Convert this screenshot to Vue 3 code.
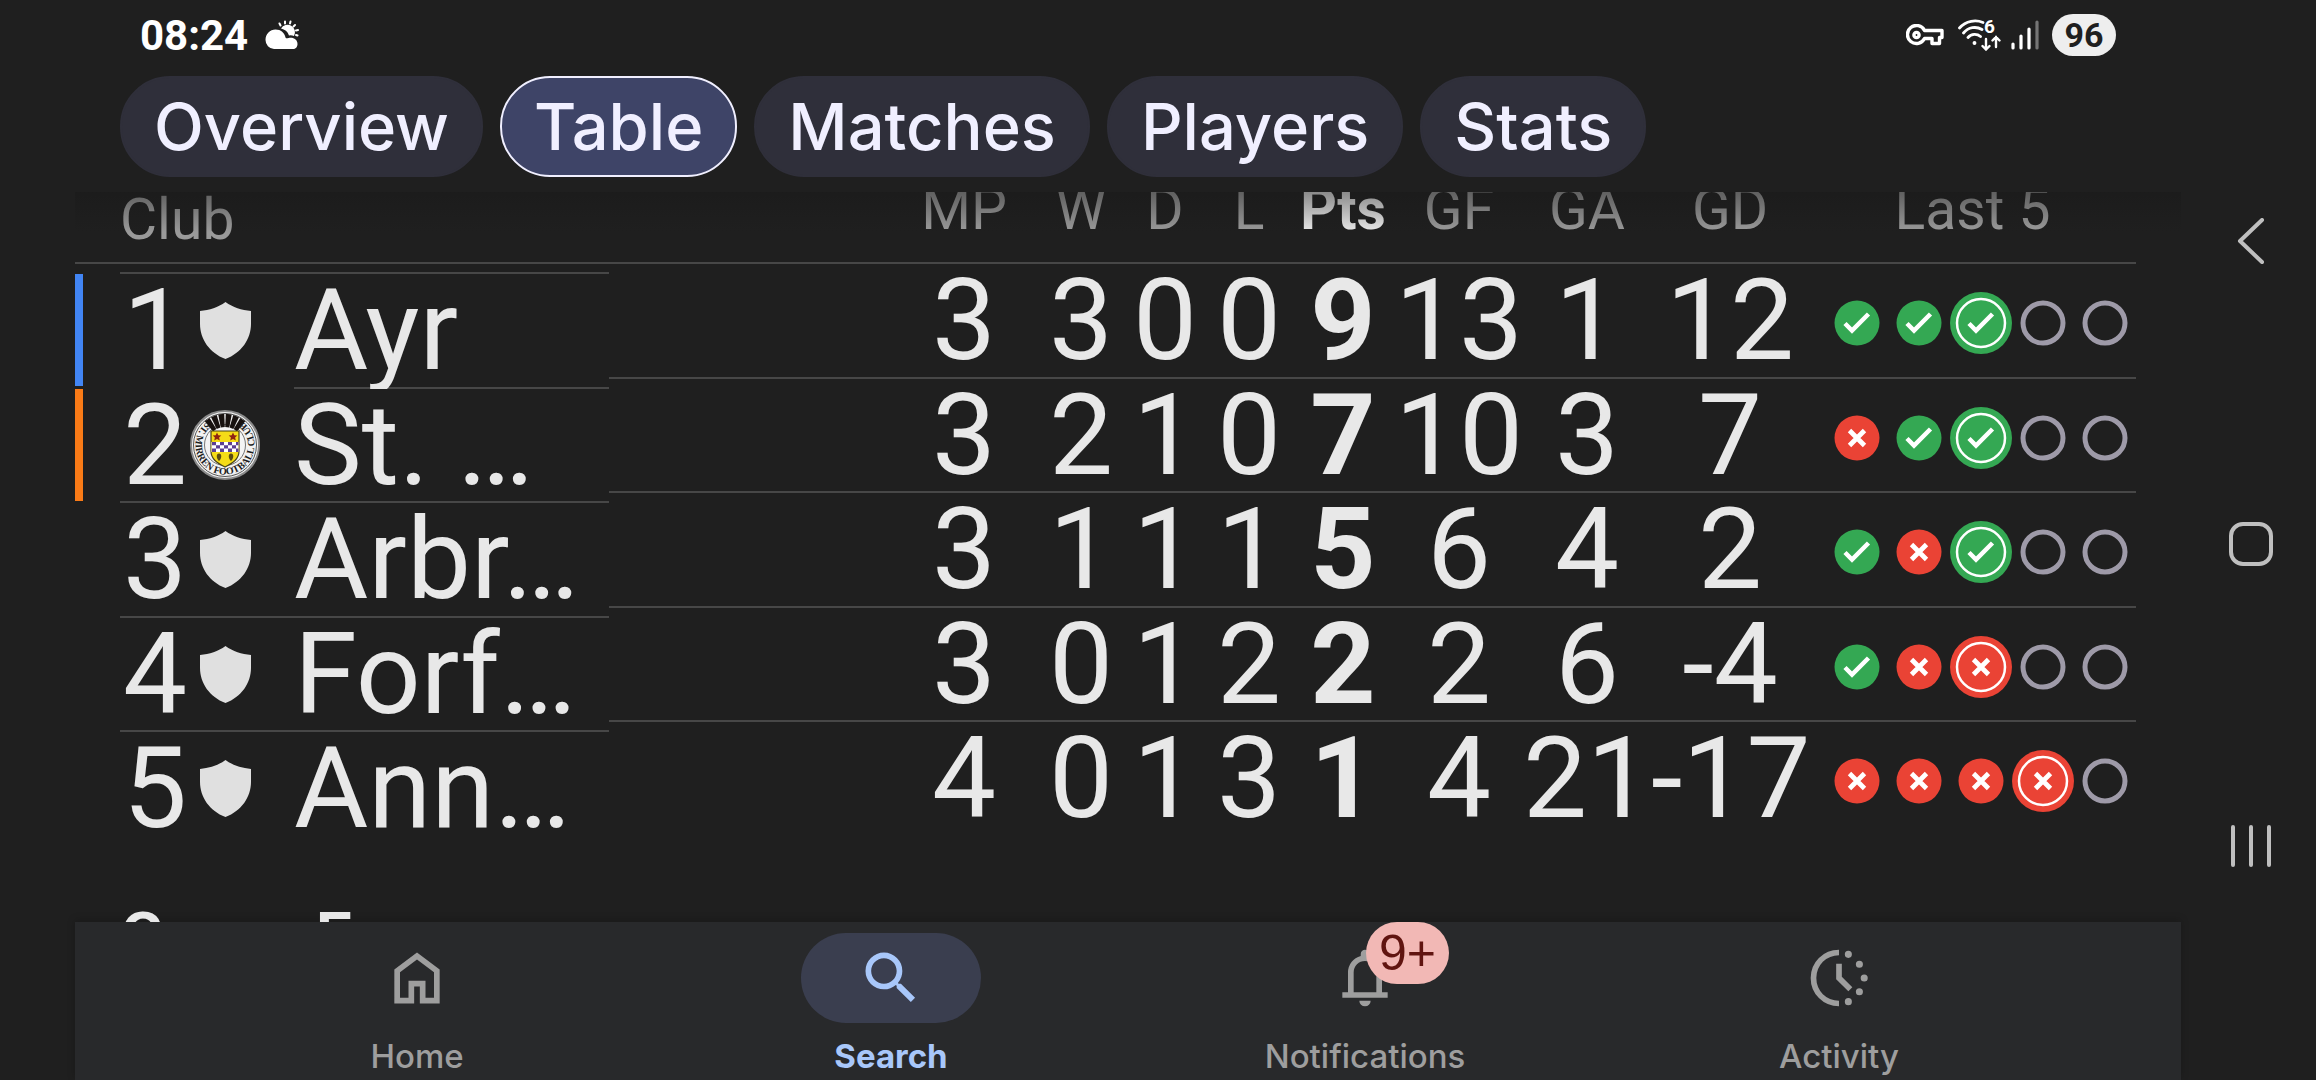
<template>
  <div class="screen">
    <div class="app">
      <header class="status-bar">
        <span class="time">08:24</span>
        <svg class="weather" viewBox="0 0 34 30" aria-hidden="true">
          <g stroke="#fff" stroke-width="2" stroke-linecap="round">
            <path d="M14.5 3.5l1 2M20 1.500v2M25.500 1.500l-.5 2M30 5l-1.500 1.500M33 10l-2 .5M32.500 15.500l-1.500-.5" />
          </g>
          <path d="M16 8.500a7.500 7.500 0 1 1 13 7.500 9 9 0 0 0-5-.6 11 11 0 0 0-8-6.900z" fill="#fff" />
          <path d="M9 29a9 9 0 0 1-8.500-9C.5 14 5 9.500 10.500 9.500c5.500 0 9 3.500 10 8 .5 1 1.500 1 3 .5 5-1 9 1.500 9 6 0 3-2 5-4.500 5z" fill="#fff" />
        </svg>
        <span class="grow"></span>
        <svg class="key" viewBox="0 0 38 22" aria-hidden="true" fill="none" stroke="#fff" stroke-width="3.400">
          <path d="M18.500 6.500H36v7h-2.500v6H26v-5h-7.500A9 9 0 1 1 18.500 6.500z" stroke-linejoin="round" />
          <circle cx="10.500" cy="11" r="2.600" />
        </svg>
        <svg class="wifi" viewBox="0 0 44 32" aria-hidden="true" fill="none" stroke="#fff" stroke-width="2.800" stroke-linecap="round">
          <path d="M1.500 9C8 1.500 18 .5 25 3.500M5.500 14C10.500 8 18 7 24 10.500M10 18.500c3.500-4 9-4 12.500-1" />
          <circle cx="16.500" cy="24" r="1.200" fill="#fff" stroke-width="1.500" />
          <path d="M28 20v10M24.500 27l3.500 3.500 3.500-3.500M38 28V18M34.500 21.500L38 18l3.500 3.500" stroke-width="2.400" />
          <text x="26" y="14" class="wifi-gen">6</text>
        </svg>
        <svg class="signal" viewBox="0 0 28 30" aria-hidden="true" stroke="#fff" stroke-width="3.200" stroke-linecap="round">
          <path d="M2 24v4M10 16v12M18 9v19" />
          <path d="M26 2v26" stroke="#757575" />
        </svg>
        <span class="battery">96</span>
      </header>

      <nav class="tabs" aria-label="Sections">
        <button
          v-for="tab in tabs"
          :key="tab"
          type="button"
          :class="['chip', { active: tab === activeTab }]"
          @click="activeTab = tab"
        >
          {{ tab }}
        </button>
      </nav>

      <main class="content">
        <div class="standings">
          <table class="clubs">
            <colgroup>
              <col class="col-marker" />
              <col class="col-rank" />
              <col class="col-crest" />
              <col />
            </colgroup>
            <thead>
              <tr>
                <th></th>
                <th colspan="3">Club</th>
              </tr>
            </thead>
            <tbody>
              <tr v-for="(team, index) in teams" :key="team.name">
                <td class="marker">
                  <span v-if="team.zone" :class="['zone', team.zone]"></span>
                </td>
                <td :class="['rank', { open: index === 1 }]">{{ index + 1 }}</td>
                <td :class="['crest', { open: index === 1 }]">
                  <svg v-if="team.crest" class="crest-badge" viewBox="0 0 70 70" aria-hidden="true">
                    <defs>
                      <path id="crest-ring" d="M15.500 13A29.500 29.500 0 1 0 54.500 13" />
                    </defs>
                    <circle cx="35" cy="35" r="34" fill="#f2f2f2" stroke="#8a8a8a" stroke-width="2" />
                    <circle cx="35" cy="35" r="31.500" fill="none" stroke="#555" stroke-width="1" />
                    <circle cx="35" cy="35" r="20.500" fill="#f4f4f4" stroke="#777" stroke-width="1" />
                    <path
                      v-for="angle in [-35, -21, -7, 7, 21, 35]"
                      :key="angle"
                      d="M33 17L32 4h6l-1 13z"
                      :transform="`rotate(${angle} 35 35)`"
                      fill="#17110f"
                    />
                    <text class="crest-text">
                      <textPath href="#crest-ring" startOffset="50%" text-anchor="middle">ST. MIRREN FOOTBALL CLUB</textPath>
                    </text>
                    <path d="M21 21h28v20c0 8-6 12-14 16-8-4-14-8-14-16z" fill="#f5dc17" stroke="#4a4416" stroke-width="1.200" />
                    <path d="M21.500 32h27v10h-27z" fill="#fff" />
                    <path d="M22 32h4v3.300h-4zM30 32h4v3.300h-4zM38 32h4v3.300h-4zM26 35.300h4v3.300h-4zM34 35.300h4v3.300h-4zM42 35.300h4v3.300h-4zM22 38.600h4V42h-4zM30 38.600h4V42h-4zM38 38.600h4V42h-4zM46 32h2.500v3.300H46zM46 38.600h2.500V42H46z" fill="#5b3f94" />
                    <path d="M27 22.500l1.300 2.800 3 .3-2.200 2 .7 3-2.800-1.500-2.800 1.500.7-3-2.200-2 3-.3zM43 22.500l1.300 2.800 3 .3-2.200 2 .7 3-2.800-1.500-2.800 1.500.7-3-2.200-2 3-.3z" fill="#8f2412" />
                    <path d="M29 43.500c3 0 3 5 0 7.500-3-2.500-3-7.500 0-7.500zM41 43.500c3 0 3 5 0 7.500-3-2.500-3-7.500 0-7.500z" fill="#5a4a12" />
                  </svg>
                  <svg v-else class="crest-shield" viewBox="0 0 51 57" aria-hidden="true">
                    <path d="M25.500 0C18 5.500 9.500 8 0 9v13c0 15 9.500 29 25.500 35C41.500 51 51 37 51 22V9C41.500 8 33 5.500 25.500 0z" fill="#e0e0e0" />
                  </svg>
                </td>
                <td class="name"><span>{{ team.name }}</span></td>
              </tr>
            </tbody>
          </table>

          <table class="stats">
            <colgroup>
              <col />
              <col v-for="col in columns" :key="col.label" :class="`col-${col.size}`" />
            </colgroup>
            <thead>
              <tr>
                <th></th>
                <th v-for="col in columns" :key="col.label" :class="{ strong: col.label === 'Pts' }">
                  {{ col.label }}
                </th>
              </tr>
            </thead>
            <tbody>
              <tr v-for="team in teams" :key="team.name">
                <td></td>
                <td v-for="(value, i) in team.stats" :key="i" :class="{ strong: i === 4 }">{{ value }}</td>
                <td>
                  <div class="form">
                    <svg
                      v-for="(result, i) in team.form"
                      :key="i"
                      class="result"
                      viewBox="0 0 62 62"
                      role="img"
                      :aria-label="labels[result]"
                    >
                      <circle v-if="result === '-'" cx="31" cy="31" r="20" fill="none" stroke="#9e9aa8" stroke-width="5" />
                      <template v-else>
                        <circle
                          cx="31"
                          cy="31"
                          :r="i === team.latest ? 31 : 22.5"
                          :fill="result === 'W' ? '#34a853' : '#ea4335'"
                        />
                        <circle v-if="i === team.latest" cx="31" cy="31" r="24" fill="none" stroke="#fff" stroke-width="2.5" />
                        <path v-if="result === 'W'" d="M19 31.500l7 7L42.500 22" fill="none" stroke="#fff" stroke-width="4.500" />
                        <path v-else d="M23.500 23.500l15 15M38.500 23.500l-15 15" fill="none" stroke="#fff" stroke-width="4.800" />
                      </template>
                    </svg>
                  </div>
                </td>
              </tr>
            </tbody>
          </table>
        </div>
        <h2 class="group-title">Group F</h2>
      </main>

      <nav class="bottom-nav" aria-label="Main">
        <button
          v-for="item in navItems"
          :key="item.label"
          type="button"
          :class="['nav-item', { selected: item.label === 'Search' }]"
        >
          <span class="pill">
            <svg class="nav-icon" viewBox="0 0 24 24" aria-hidden="true">
              <path :d="item.icon" fill="currentColor" />
            </svg>
            <span v-if="item.badge" class="badge">{{ item.badge }}</span>
          </span>
          <span class="nav-label">{{ item.label }}</span>
        </button>
      </nav>
    </div>

    <aside class="system-nav">
      <button type="button" aria-label="Back">
        <svg viewBox="0 0 46 46"><path d="M34 2L12 23l22 21" /></svg>
      </button>
      <button type="button" aria-label="Home screen">
        <svg viewBox="0 0 46 46"><rect x="3" y="3" width="40" height="40" rx="12" /></svg>
      </button>
      <button type="button" aria-label="Recent apps">
        <svg viewBox="0 0 46 46"><path d="M5 4v38M23 4v38M41 4v38" /></svg>
      </button>
    </aside>
  </div>
</template>

<script setup>
import { ref } from 'vue'

const tabs = ['Overview', 'Table', 'Matches', 'Players', 'Stats']
const activeTab = ref('Table')

const columns = [
  { label: 'MP', size: 'mp' },
  { label: 'W', size: 'small' },
  { label: 'D', size: 'small' },
  { label: 'L', size: 'small' },
  { label: 'Pts', size: 'pts' },
  { label: 'GF', size: 'goals' },
  { label: 'GA', size: 'goals' },
  { label: 'GD', size: 'diff' },
  { label: 'Last 5', size: 'form' }
]

const labels = { W: 'Win', L: 'Loss', '-': 'Not played' }

const teams = [
  { name: 'Ayr', zone: 'first', stats: [3, 3, 0, 0, 9, 13, 1, 12], form: 'WWW--', latest: 2 },
  { name: 'St. …', zone: 'second', crest: true, stats: [3, 2, 1, 0, 7, 10, 3, 7], form: 'LWW--', latest: 2 },
  { name: 'Arbr…', stats: [3, 1, 1, 1, 5, 6, 4, 2], form: 'WLW--', latest: 2 },
  { name: 'Forf…', stats: [3, 0, 1, 2, 2, 2, 6, -4], form: 'WLL--', latest: 2 },
  { name: 'Ann…', stats: [4, 0, 1, 3, 1, 4, 21, -17], form: 'LLLL-', latest: 3 }
]

const navItems = [
  {
    label: 'Home',
    icon: 'M6 19h3v-6h6v6h3v-9l-6-4.500L6 10zm-2 2V9l8-6 8 6v12h-7v-6h-2v6z'
  },
  {
    label: 'Search',
    icon: 'M15.500 14h-.79l-.28-.27A6.471 6.471 0 0 0 16 9.500 6.500 6.500 0 1 0 9.500 16c1.610 0 3.090-.59 4.230-1.570l.27.28v.79l5 4.990L20.490 19zm-6 0C7.010 14 5 11.990 5 9.500S7.010 5 9.500 5 14 7.010 14 9.500 11.990 14 9.500 14z'
  },
  {
    label: 'Notifications',
    badge: '9+',
    icon: 'M4 19v-2h2v-7q0-2.075 1.250-3.688T10.500 4.200v-.7q0-.625.438-1.062T12 2t1.063.438T13.500 3.500v.7q2 .5 3.250 2.112T18 10v7h2v2zm8 3q-.825 0-1.412-.587T10 20h4q0 .825-.587 1.413T12 22m-4-5h8v-7q0-1.650-1.175-2.825T12 6 9.175 7.175 8 10z'
  },
  {
    label: 'Activity',
    icon: 'M12 22Q7.800 22 4.900 19.100 2 16.200 2 12 2 7.800 4.900 4.900 7.800 2 12 2V4Q8.700 4 6.300 6.300 4 8.700 4 12 4 15.300 6.300 17.700 8.700 20 12 20zM11 7h2v4.600l3.700 3.700-1.400 1.400L11 12.400zM15.300 2.400a1.250 1.250 0 1 1 0 2.500 1.250 1.250 0 0 1 0-2.500M19.200 5.900a1.250 1.250 0 1 1 0 2.500 1.250 1.250 0 0 1 0-2.500M20.900 10.750a1.250 1.250 0 1 1 0 2.500 1.250 1.250 0 0 1 0-2.500M19.200 15.600a1.250 1.250 0 1 1 0 2.500 1.250 1.250 0 0 1 0-2.500M15.300 19.100a1.250 1.250 0 1 1 0 2.500 1.250 1.250 0 0 1 0-2.500'
  }
]
</script>

<style>
body {
  background: #1f1f1f;
}
</style>

<style scoped>
.screen {
  display: flex;
  height: 100vh;
  padding-left: 75px;
  background: #1f1f1f;
  color: #e8e8e8;
  font-family: Roboto, 'Liberation Sans', sans-serif;
}

button {
  border: none;
  cursor: pointer;
}

.app {
  flex: 1;
  min-width: 0;
  display: flex;
  flex-direction: column;
}

/* status bar */
.status-bar {
  display: flex;
  align-items: center;
  height: 70px;
  padding: 0 65px;
  color: #fff;
}

.time {
  font-size: 42px;
  font-weight: 700;
}

.weather {
  width: 34px;
  height: 30px;
  margin-left: 17px;
}

.grow {
  flex: 1;
}

.key {
  width: 38px;
  height: 22px;
}

.wifi {
  width: 44px;
  height: 32px;
  margin-left: 14px;
}

.wifi-gen {
  fill: #fff;
  stroke: none;
  font-size: 19px;
  font-weight: 700;
}

.signal {
  width: 28px;
  height: 30px;
  margin-left: 9px;
}

.battery {
  margin-left: 13px;
  width: 64px;
  border-radius: 21px;
  background: #eee;
  color: #1f1f1f;
  font-size: 34px;
  font-weight: 700;
  line-height: 42px;
  text-align: center;
}

/* tabs */
.tabs {
  display: flex;
  gap: 17px;
  padding: 6px 45px 15px;
}

.chip {
  box-sizing: border-box;
  height: 101px;
  padding: 0 32px;
  border: 2px solid #2f2f3a;
  border-radius: 50px;
  background: #2f2f3a;
  color: #f0efff;
  font-family: Inter, Roboto, sans-serif;
  font-size: 65px;
  font-weight: 500;
  line-height: 96px;
}

.chip.active {
  border-color: #f0efff;
  background: #3e4467;
}

/* standings */
.content {
  position: relative;
  flex: 1;
  min-height: 0;
  overflow: hidden;
}

.content::before {
  content: '';
  position: absolute;
  inset: 0 0 auto;
  height: 40px;
  background: linear-gradient(rgba(24, 24, 24, 0.45), rgba(24, 24, 24, 0));
  z-index: 1;
}

.standings {
  display: flex;
  align-items: flex-start;
  padding-right: 45px;
}

table {
  border-collapse: separate;
  border-spacing: 0;
  table-layout: fixed;
}

th,
td {
  box-sizing: border-box;
  padding: 0;
  white-space: nowrap;
}

th {
  border-bottom: 2px solid #474747;
  color: #9a9a9a;
  font-size: 57px;
  font-weight: 400;
  line-height: 60px;
  vertical-align: top;
}

td {
  font-size: 114px;
  line-height: 112px;
  vertical-align: top;
}

tbody tr {
  height: 114px;
}

tbody tr:nth-child(odd) {
  height: 115px;
}

.strong {
  color: #e8e8e8;
  font-weight: 700;
}

.clubs {
  width: 534px;
  margin-top: -2px;
}

.clubs th {
  height: 74px;
  text-align: left;
}

.clubs tbody::before {
  content: '';
  display: block;
  height: 8px;
}

.clubs td {
  border-top: 2px solid #474747;
}

.clubs td.marker,
.clubs td.open {
  border-color: transparent;
}

.col-marker {
  width: 45px;
}

.col-rank {
  width: 70px;
}

.col-crest {
  width: 104px;
}

.zone {
  display: block;
  width: 8px;
  height: 112px;
}

.zone.first {
  background: #4285f4;
}

.zone.second {
  background: #fa7b17;
}

.rank {
  text-align: center;
}

.crest svg {
  display: block;
}

.crest {
  vertical-align: middle;
}

.crest-badge {
  width: 70px;
  height: 70px;
}

.crest-text {
  fill: #1d1d1d;
  font-family: 'Liberation Serif', serif;
  font-size: 10px;
  font-weight: 700;
}

.crest-shield {
  width: 51px;
  height: 57px;
  margin-left: 10px;
}

.name span {
  display: block;
  height: 115px;
  margin-bottom: -3px;
  overflow: hidden;
}

.stats {
  flex: 1;
  width: 0;
  margin-top: -12px;
  text-align: center;
}

.stats th {
  height: 84px;
}

.stats td {
  border-bottom: 2px solid #474747;
}

.stats tr:last-child td {
  border-color: transparent;
}

.stats thead tr:last-child th {
  border-color: #474747;
}

.col-mp {
  width: 150px;
}

.col-small {
  width: 84px;
}

.col-pts {
  width: 104px;
}

.col-goals {
  width: 128px;
}

.col-diff {
  width: 158px;
}

.col-form {
  width: 327px;
}

.form {
  display: flex;
  justify-content: flex-end;
  align-items: center;
  height: 112px;
  box-sizing: border-box;
  padding-top: 6px;
}

.result {
  width: 62px;
  height: 62px;
}

.group-title {
  margin: 60px 0 0;
  padding-left: 45px;
  font-size: 66px;
  font-weight: 600;
  line-height: 66px;
}

/* bottom navigation */
.bottom-nav {
  display: flex;
  height: 158px;
  padding: 0 105px;
  background: #28292b;
  box-shadow: 0 -2px 8px rgba(0, 0, 0, 0.2);
}

.nav-item {
  flex: 1;
  display: flex;
  flex-direction: column;
  align-items: center;
  padding: 11px 0 0;
  background: none;
  color: #9e9e9e;
}

.nav-item.selected {
  color: #a8c7fa;
}

.pill {
  position: relative;
  display: flex;
  align-items: center;
  justify-content: center;
  width: 180px;
  height: 90px;
  border-radius: 45px;
}

.selected .pill {
  background: #3a3e4f;
}

.nav-icon {
  width: 68px;
  height: 68px;
}

.badge {
  position: absolute;
  top: -11px;
  left: 91px;
  width: 83px;
  border-radius: 31px;
  background: #f2b8b5;
  color: #601410;
  font-size: 50px;
  font-weight: 500;
  line-height: 62px;
  text-align: center;
}

.nav-label {
  margin-top: 13px;
  font-family: Inter, Roboto, sans-serif;
  font-size: 33px;
  font-weight: 500;
  line-height: 40px;
}

.selected .nav-label {
  font-weight: 700;
}

/* device buttons */
.system-nav {
  display: flex;
  flex-direction: column;
  align-items: center;
  justify-content: space-between;
  box-sizing: border-box;
  width: 135px;
  padding: 196px 0 189px 5px;
}

.system-nav button {
  display: flex;
  align-items: center;
  justify-content: center;
  width: 90px;
  height: 90px;
  padding: 0;
  background: none;
}

.system-nav svg {
  width: 46px;
  height: 46px;
  fill: none;
  stroke: #bfbfbf;
  stroke-width: 4;
  stroke-linecap: round;
  stroke-linejoin: round;
}
</style>
